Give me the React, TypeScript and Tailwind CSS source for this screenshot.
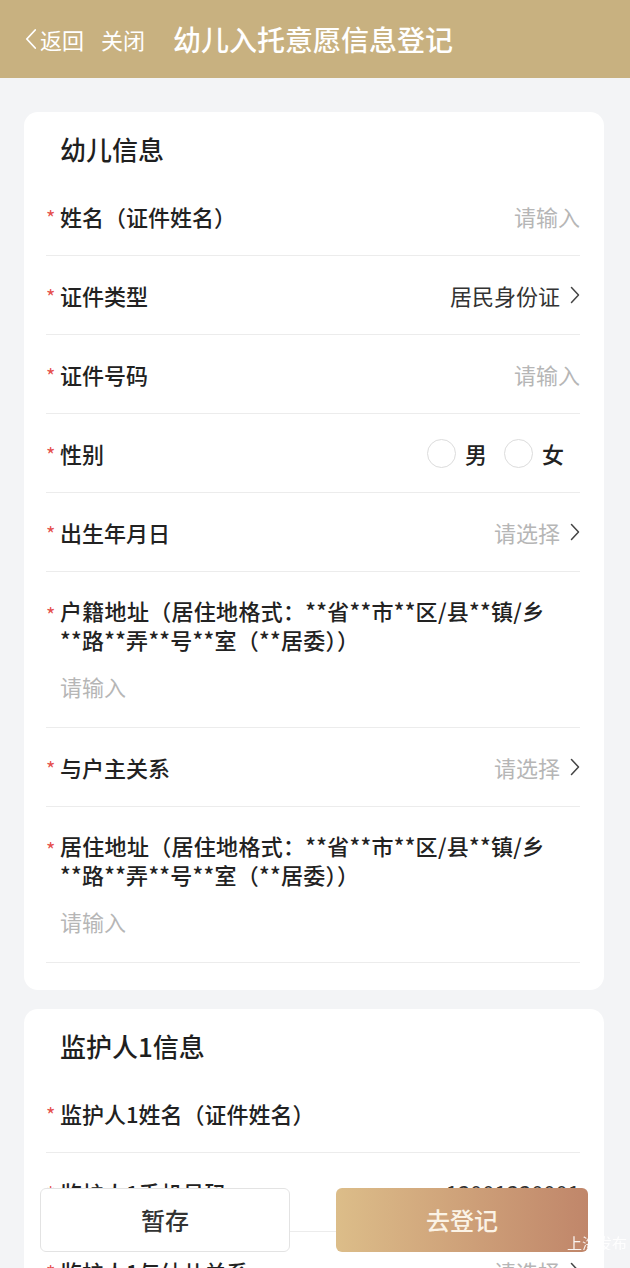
import React from 'react';

const FONT = { fontFamily: '"Noto Sans CJK SC", "Noto Sans", sans-serif' };

function Chevron({ className, left }: { className?: string; left?: boolean }) {
  return (
    <svg viewBox="0 0 10 18" className={className} fill="none">
      <path
        d={left ? 'M8.5 1.5 L1.5 9 L8.5 16.5' : 'M1.5 1.5 L8.5 9 L1.5 16.5'}
        stroke="currentColor"
        strokeWidth="1.5"
        strokeLinecap="round"
        strokeLinejoin="round"
      />
    </svg>
  );
}

function Star({ className }: { className?: string }) {
  return (
    <span className={'text-[#e5504c] text-[20px] w-[14px] shrink-0 ' + (className || 'leading-none mt-[4px]')}>*</span>
  );
}

type RowProps = {
  label: string;
  value?: string;
  placeholder?: string;
  arrow?: boolean;
  children?: React.ReactNode;
};

function Row({ label, value, placeholder, arrow, children }: RowProps) {
  return (
    <div className="h-[79px] flex items-center border-b border-[#ececec]">
      <Star />
      <span className="text-[22px] font-medium text-[#222] leading-none">{label}</span>
      <div className="ml-auto flex items-center">
        {children}
        {value && <span className="text-[22px] text-[#333] leading-none">{value}</span>}
        {placeholder && <span className="text-[22px] text-[#b6b6b6] leading-none">{placeholder}</span>}
        {arrow && <Chevron className="w-[10px] h-[18px] ml-[10px] text-[#444]" />}
      </div>
    </div>
  );
}

// long address label, the star's red mark sits on the first line
function AddressRow({ line1, line2 }: { line1: string; line2: string }) {
  return (
    <div className="pt-[24px] pb-[26px] border-b border-[#ececec]">
      <div className="flex">
        <Star className="leading-[29px] mt-[4px]" />
        <div className="text-[22px] font-medium text-[#222] leading-[29px] tracking-[0.3px]">
          <div>{line1}</div>
          <div>{line2}</div>
        </div>
      </div>
      <div className="pl-[14px] mt-[18px] text-[22px] text-[#b6b6b6] leading-[29px]">请输入</div>
    </div>
  );
}

function Radio({ label }: { label: string }) {
  return (
    <div className="flex items-center">
      <span className="w-[29px] h-[29px] rounded-full border border-[#dcdcdc]" />
      <span className="ml-[9px] text-[22px] font-medium text-[#222] leading-none">{label}</span>
    </div>
  );
}

function Card({ title, children }: { title: string; children: React.ReactNode }) {
  return (
    <div className="bg-white rounded-[14px] pl-[22px] pr-[24px] pb-[27px]">
      <div className="pt-[22px] pb-[13px] pl-[14px] text-[26px] font-medium text-[#1f1f1f] leading-[30px]">{title}</div>
      {children}
    </div>
  );
}

export default function App() {
  return (
    <div className="min-h-screen bg-[#f3f4f6]" style={FONT}>
      {/* Header */}
      <header className="h-[78px] bg-[#c8b180] flex items-center pl-[25px] text-white">
        <Chevron left className="w-[12px] h-[22px] text-white" />
        <span className="ml-[3px] text-[22px] leading-none">返回</span>
        <span className="ml-[17px] text-[22px] leading-none">关闭</span>
        <span className="ml-[28px] text-[28px] font-medium leading-none">幼儿入托意愿信息登记</span>
      </header>

      <main className="pt-[34px] pl-[24px] pr-[26px] pb-[120px] flex flex-col gap-[19px]">
        <Card title="幼儿信息">
          <Row label="姓名（证件姓名）" placeholder="请输入" />
          <Row label="证件类型" value="居民身份证" arrow />
          <Row label="证件号码" placeholder="请输入" />
          <Row label="性别">
            <div className="flex items-center gap-[17px] mr-[16px]">
              <Radio label="男" />
              <Radio label="女" />
            </div>
          </Row>
          <Row label="出生年月日" placeholder="请选择" arrow />
          <AddressRow line1="户籍地址（居住地格式：**省**市**区/县**镇/乡" line2="**路**弄**号**室（**居委））" />
          <Row label="与户主关系" placeholder="请选择" arrow />
          <AddressRow line1="居住地址（居住地格式：**省**市**区/县**镇/乡" line2="**路**弄**号**室（**居委））" />
        </Card>

        <Card title="监护人1信息">
          <Row label="监护人1姓名（证件姓名）" />
          <Row label="监护人1手机号码" value="13001330001" />
          <Row label="监护人1与幼儿关系" placeholder="请选择" arrow />
          <Row label="监护人1证件类型" value="居民身份证" arrow />
        </Card>
      </main>

      {/* Bottom actions */}
      <div className="fixed left-0 right-0 bottom-[16px] flex justify-between pl-[40px] pr-[42px]">
        <button className="w-[250px] h-[64px] bg-white border border-[#e3e3e3] rounded-[6px] text-[24px] font-medium text-[#333]">
          暂存
        </button>
        <button className="w-[252px] h-[64px] rounded-[6px] text-[24px] font-medium text-[#fbf3e6] bg-gradient-to-r from-[#dcbd89] to-[#c0866a]">
          去登记
        </button>
      </div>
      <div className="fixed right-0 bottom-[18px] w-[63px] overflow-hidden text-[15px] text-white/90 leading-none whitespace-nowrap">
        上海发布
      </div>
    </div>
  );
}
